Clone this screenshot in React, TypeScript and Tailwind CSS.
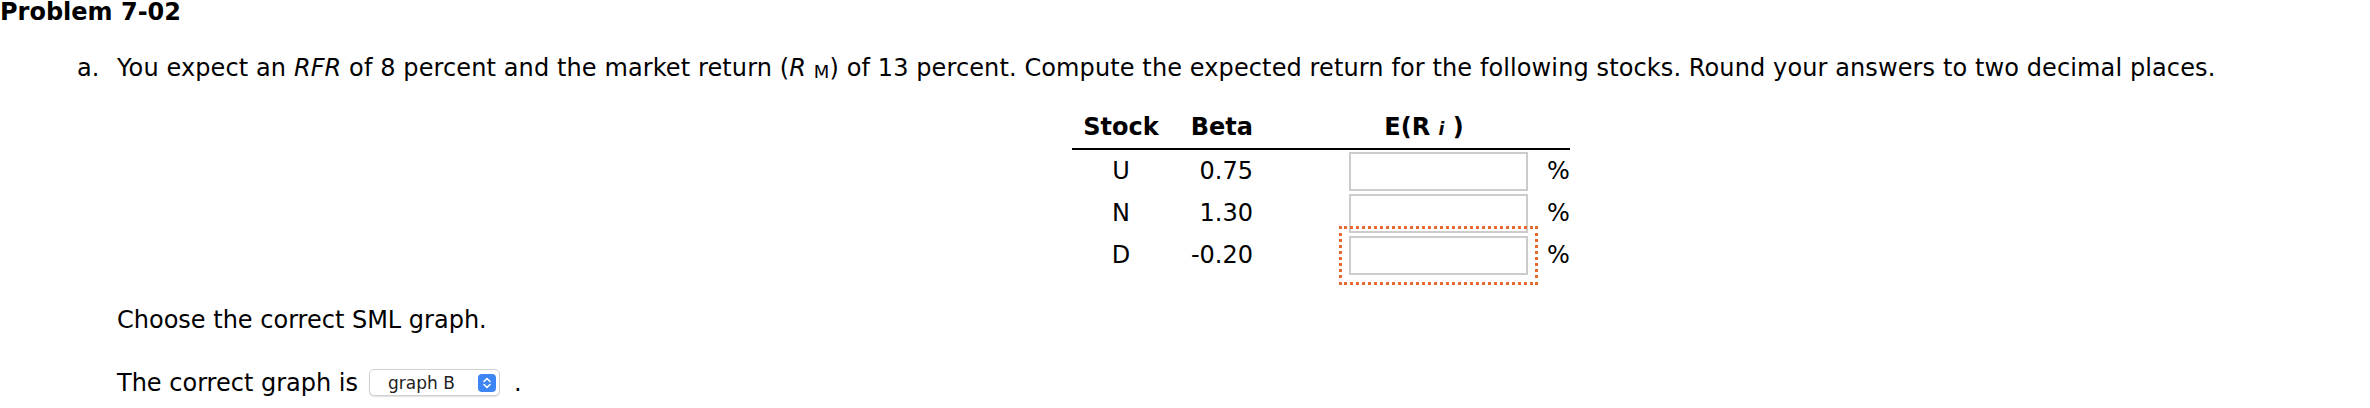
const ROWS = [
  { stock: 'U', beta: '0.75', focused: false },
  { stock: 'N', beta: '1.30', focused: false },
  { stock: 'D', beta: '-0.20', focused: true },
]

function Stepper() {
  return (
    <span className="flex h-[18px] w-[18px] items-center justify-center rounded-[4px] bg-[#3d85f5]">
      <svg width="10" height="14" viewBox="0 0 10 14" fill="none">
        <path d="M2 5.5 L5 2.5 L8 5.5" stroke="white" strokeWidth="1.6" strokeLinecap="round" strokeLinejoin="round" />
        <path d="M2 8.5 L5 11.5 L8 8.5" stroke="white" strokeWidth="1.6" strokeLinecap="round" strokeLinejoin="round" />
      </svg>
    </span>
  )
}

export default function App() {
  return (
    <div className="h-[408px] w-[2370px] overflow-hidden bg-white font-['DejaVu_Sans',sans-serif] text-[24px] leading-[24px] text-black">
      <h1 className="font-bold">Problem 7-02</h1>

      <div className="mt-[32px] flex">
        <span className="ml-[77px] w-[40px] shrink-0">a.</span>
        <div className="flex-1">
          <p className="whitespace-nowrap tracking-[0.11px]">
            You expect an <i>RFR</i> of 8 percent and the market return (<i>R</i>{' '}
            <span className="text-[18px] align-[-2px]">M</span>) of 13 percent. Compute the expected
            return for the following stocks. Round your answers to two decimal places.
          </p>

          {/* Stock table */}
          <div className="ml-[955px] mt-[31px] w-[498px]">
            <div className="grid grid-cols-[98px_95px_305px] border-b-2 border-black pb-[7px] font-bold">
              <div className="text-center">Stock</div>
              <div className="pr-[12px] text-right">Beta</div>
              <div className="pl-[13px] text-center">
                E(R <i className="text-[17px]">i</i> )
              </div>
            </div>
            {ROWS.map(row => (
              <div key={row.stock} className="grid h-[42px] grid-cols-[98px_95px_305px] items-center">
                <div className="text-center">{row.stock}</div>
                <div className="pr-[12px] text-right">{row.beta}</div>
                <div className="flex items-center pl-[84px]">
                  <input
                    type="text"
                    className={`h-[39px] w-[179px] border-2 border-[#cccccc] bg-white px-2 text-[20px] ${
                      row.focused ? 'outline-[3px] outline-offset-[7px] outline-dotted outline-[#e8692c]' : 'outline-none'
                    }`}
                  />
                  <span className="ml-[19px]">%</span>
                </div>
              </div>
            ))}
          </div>

          <p className="mt-[32px]">Choose the correct SML graph.</p>

          <div className="mt-[37px] flex h-[27px] items-center">
            <span>The correct graph is</span>
            <div className="ml-[11px] flex h-[27px] w-[131px] items-center justify-between rounded-[5px] border border-[#d0d0d0] bg-white pl-[18px] pr-[3px] shadow-[0_1px_1px_rgba(0,0,0,0.12)]">
              <span className="text-[17px] leading-[20px] text-[#222]">graph B</span>
              <Stepper />
            </div>
            <span className="ml-[14px]">.</span>
          </div>
        </div>
      </div>
    </div>
  )
}
